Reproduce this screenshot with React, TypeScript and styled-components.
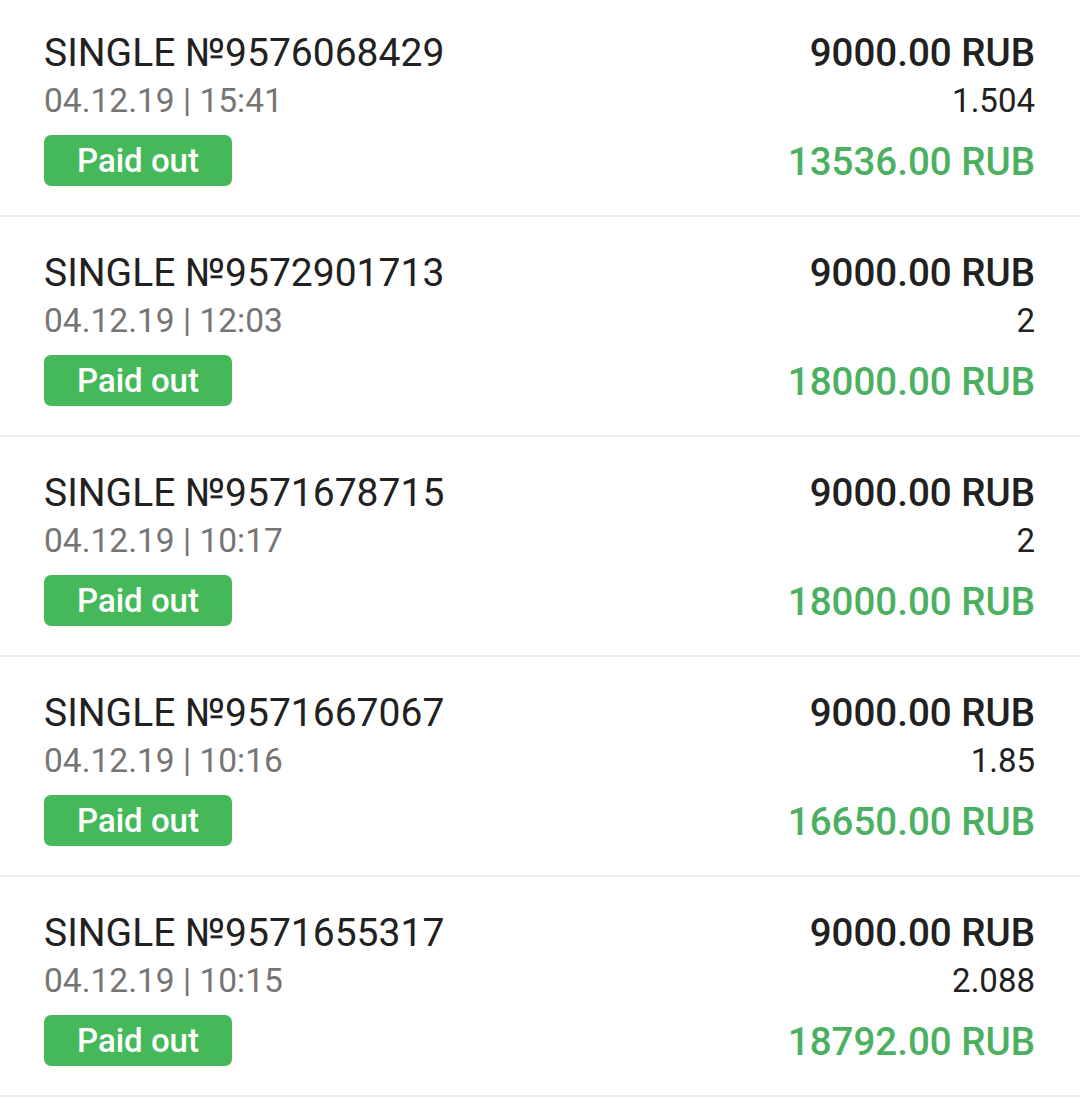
import React from "react";
import styled, { createGlobalStyle } from "styled-components";

const GlobalStyle = createGlobalStyle`
  html, body { margin: 0; padding: 0; background: #ffffff; overflow: hidden; }
  body { font-family: Roboto, "Liberation Sans", sans-serif; }
`;

const List = styled.div`
  display: flex;
  flex-direction: column;
  width: 1080px;
  margin-top: -3px;
`;

const Row = styled.div`
  display: flex;
  justify-content: space-between;
  height: 220px;
  flex-shrink: 0;
  box-sizing: border-box;
  padding: 32px 45px 0 44px;
  border-bottom: 2px solid #ececec;
`;

const Left = styled.div`
  display: flex;
  flex-direction: column;
  align-items: flex-start;
`;

const Right = styled.div`
  display: flex;
  flex-direction: column;
  align-items: flex-end;
`;

const Title = styled.div`
  font-size: 39px;
  line-height: 48px;
  color: #212121;
  font-weight: 400;
`;

const DateText = styled.div`
  margin-top: 2px;
  font-size: 33.5px;
  line-height: 44px;
  color: #757575;
`;

const Badge = styled.div`
  margin-top: 12px;
  width: 188px;
  height: 51px;
  border-radius: 7px;
  background: #45b95a;
  color: #ffffff;
  font-size: 33px;
  font-weight: 500;
  display: flex;
  align-items: center;
  justify-content: center;
`;

const Stake = styled.div`
  font-size: 38.5px;
  line-height: 48px;
  font-weight: 500;
  color: #212121;
`;

const Coef = styled.div`
  margin-top: 2px;
  font-size: 33px;
  line-height: 44px;
  color: #212121;
`;

const Win = styled.div`
  margin-top: 15px;
  font-size: 38.5px;
  line-height: 48px;
  font-weight: 500;
  color: #4cb061;
`;

const bets = [
  { id: "9576068429", time: "15:41", coef: "1.504", win: "13536.00" },
  { id: "9572901713", time: "12:03", coef: "2", win: "18000.00" },
  { id: "9571678715", time: "10:17", coef: "2", win: "18000.00" },
  { id: "9571667067", time: "10:16", coef: "1.85", win: "16650.00" },
  { id: "9571655317", time: "10:15", coef: "2.088", win: "18792.00" },
];

export default function App() {
  return (
    <>
      <GlobalStyle />
      <List>
        {bets.map((b) => (
          <Row key={b.id}>
            <Left>
              <Title>SINGLE №{b.id}</Title>
              <DateText>04.12.19 | {b.time}</DateText>
              <Badge>Paid out</Badge>
            </Left>
            <Right>
              <Stake>9000.00 RUB</Stake>
              <Coef>{b.coef}</Coef>
              <Win>{b.win} RUB</Win>
            </Right>
          </Row>
        ))}
      </List>
    </>
  );
}
